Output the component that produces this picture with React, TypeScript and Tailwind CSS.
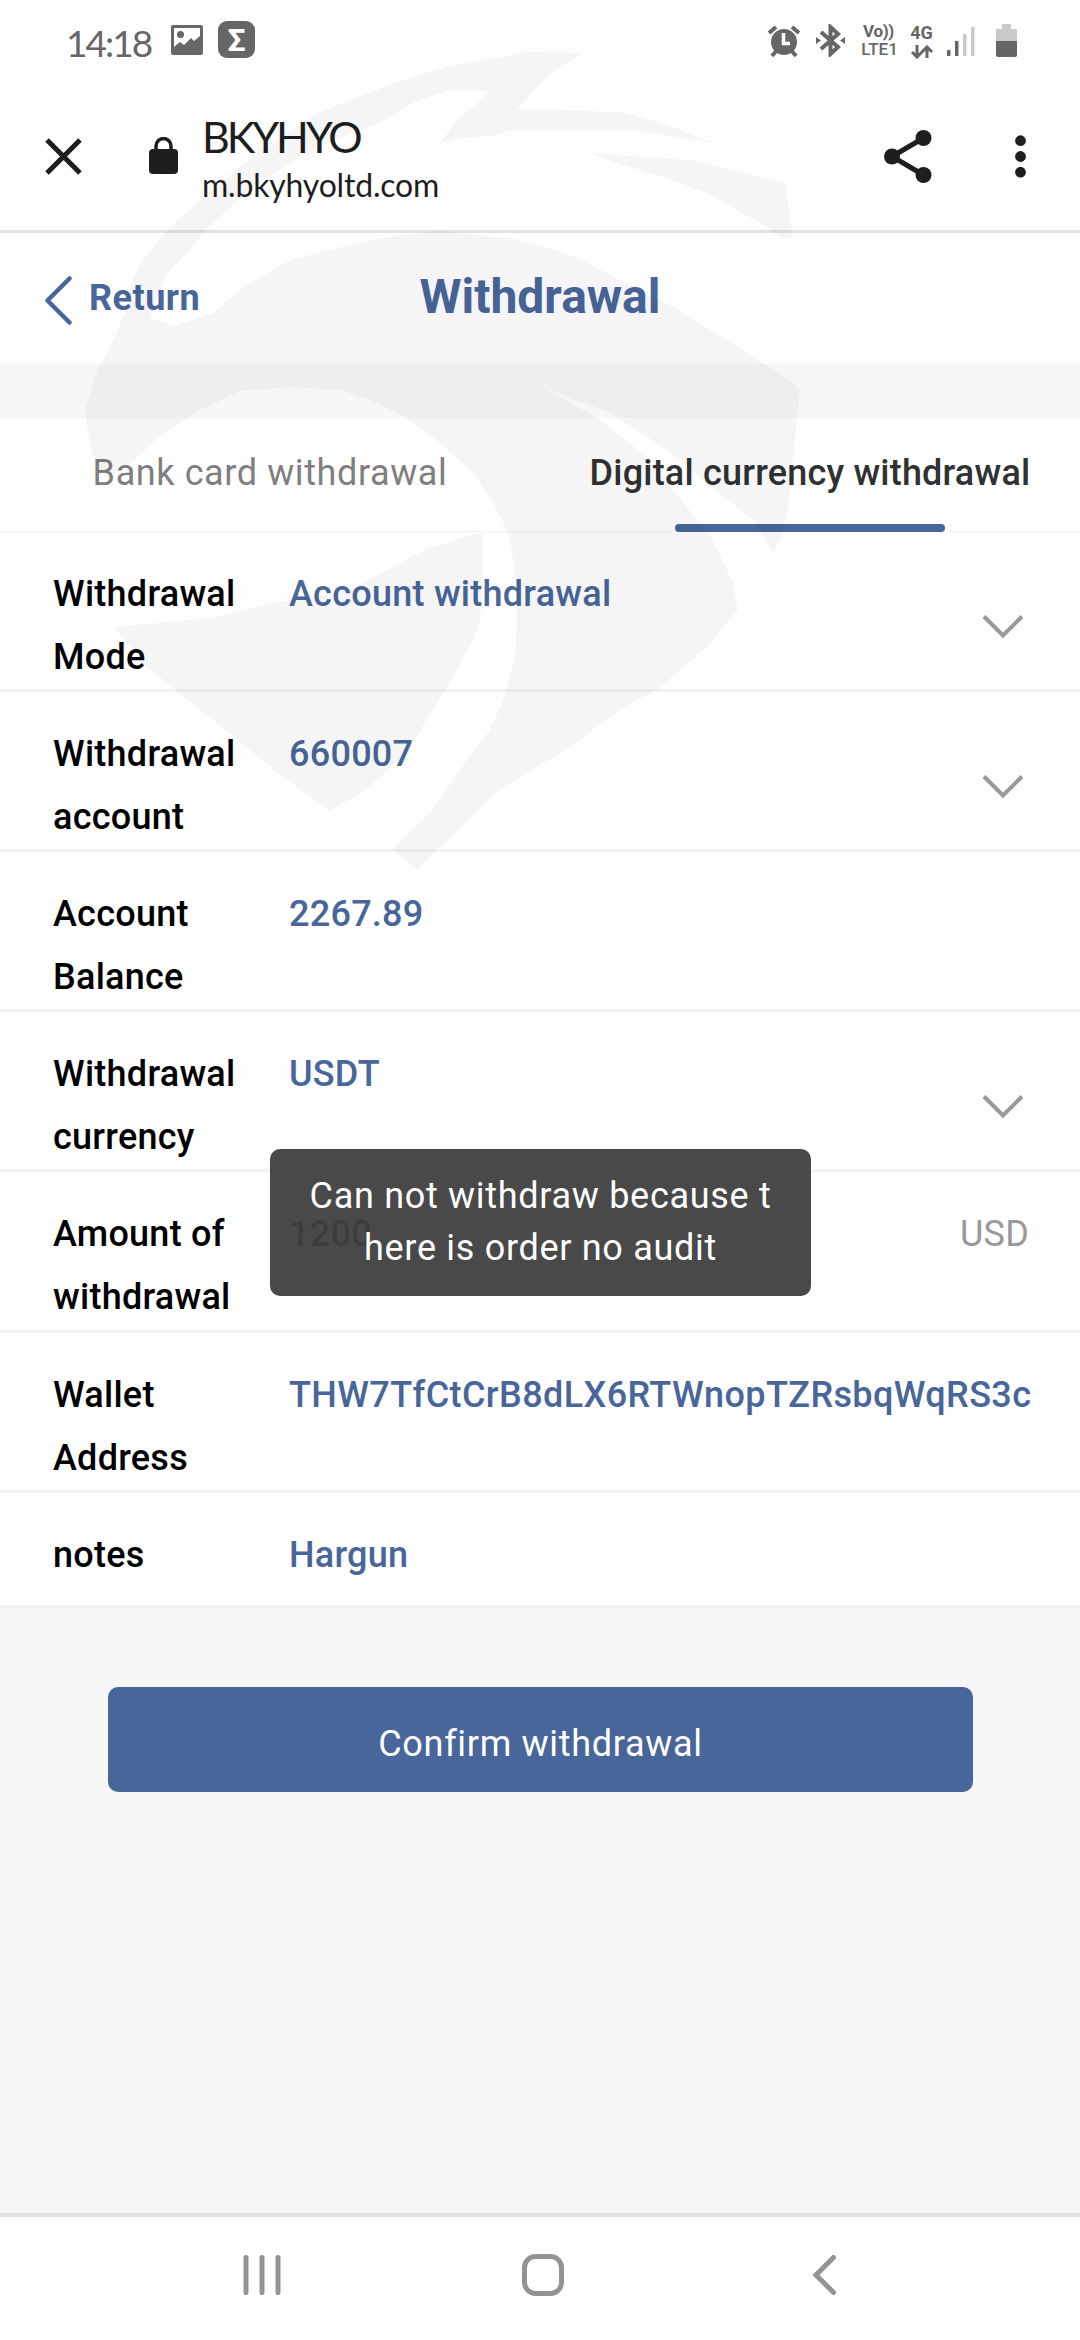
import React from "react";
import clsx from "clsx";

interface IFieldProp {
  label: string;
  value: string;
  hasArrow?: boolean;
  unit?: string;
  height: string;
}

const FIELDS: IFieldProp[] = [
  {
    label: "Withdrawal Mode",
    value: "Account withdrawal",
    hasArrow: true,
    height: "h-[160px]",
  },
  {
    label: "Withdrawal account",
    value: "660007",
    hasArrow: true,
    height: "h-[160px]",
  },
  { label: "Account Balance", value: "2267.89", height: "h-[160px]" },
  {
    label: "Withdrawal currency",
    value: "USDT",
    hasArrow: true,
    height: "h-[160px]",
  },
  {
    label: "Amount of withdrawal",
    value: "1200",
    unit: "USD",
    height: "h-[161px]",
  },
  {
    label: "Wallet Address",
    value: "THW7TfCtCrB8dLX6RTWnopTZRsbqWqRS3c",
    height: "h-[160px]",
  },
  { label: "notes", value: "Hargun", height: "h-[115px]" },
];

const StatusBar: React.FC = () => (
  <div className="flex h-[80px] items-start pt-[21px] pl-[66px] pr-[63px] text-[#666]">
    <span className="w-[105px] font-['Lato'] text-[37px] leading-[44px] tracking-[-2px]">
      14:18
    </span>
    <svg className="mt-[4px] h-[30px] w-[32px]" viewBox="0 0 32 30">
      <path
        fillRule="evenodd"
        fill="currentColor"
        d="M2 0H30Q32 0 32 2V28Q32 30 30 30H2Q0 30 0 28V2Q0 0 2 0ZM3 3V22L9 17L13 20L20 13L23 16L29 11V3Z"
      />
      <circle cx="9.500" cy="9.500" r="3.500" fill="currentColor" />
    </svg>
    <div className="ml-[15px] flex h-[37px] w-[37px] items-center justify-center rounded-[9px] bg-[#666] text-[32px] leading-none font-bold text-white">
      Σ
    </div>
    <div className="grow" />
    <svg className="mt-[3px] h-[33px] w-[34px]" viewBox="0 0 34 33">
      <g stroke="currentColor" strokeWidth="4" fill="none">
        <path d="M2 9L9 3M25 3L32 9M5 32L10 26M29 32L24 26" />
      </g>
      <circle cx="17" cy="18" r="13" fill="currentColor" />
      <path d="M16.500 9V19.500H23" stroke="#fff" strokeWidth="3.500" fill="none" />
    </svg>
    <svg className="ml-[15px] mt-[3px] h-[33px] w-[29px]" viewBox="0 0 29 33">
      <path
        d="M5 8L22 23L14.500 30V3L22 10L5 25"
        fill="none"
        stroke="currentColor"
        strokeWidth="4"
      />
      <path d="M0 13L5 16.500L0 20ZM29 13L24 16.500L29 20Z" fill="currentColor" />
    </svg>
    <div className="ml-[15px] flex w-[39px] flex-col items-center text-[17px] leading-[17px] font-bold">
      <span className="mt-[2px] mr-[2px] tracking-[-0.3px]">Vo))</span>
      <span className="mt-[1px] text-[17px] font-medium">LTE1</span>
    </div>
    <div className="ml-[10px] mt-[3px] flex w-[25px] flex-col items-center text-[18px] leading-[17px] font-bold">
      <span>4G</span>
      <svg className="mt-[4px] h-[14px] w-[24px]" viewBox="0 0 24 14">
        <path
          d="M7 0V11M2 7L7 12L12 7M17 13V2M12 7L17 2L22 7"
          fill="none"
          stroke="currentColor"
          strokeWidth="3"
        />
      </svg>
    </div>
    <svg className="ml-[13px] mt-[5px] h-[30px] w-[28px]" viewBox="0 0 28 30">
      <rect x="0" y="24" width="3.500" height="6" fill="currentColor" />
      <rect x="8" y="15" width="3.500" height="15" fill="currentColor" />
      <rect x="16" y="8" width="3.500" height="22" fill="#c9c9c9" />
      <rect x="24" y="1" width="3.500" height="29" fill="#c9c9c9" />
    </svg>
    <svg className="ml-[21px] mt-[3px] h-[33px] w-[21px]" viewBox="0 0 21 33">
      <path d="M6 0H15V5H20Q21 5 21 6V17H0V6Q0 5 1 5H6Z" fill="#c9c9c9" />
      <path d="M0 17H21V31Q21 33 19 33H2Q0 33 0 31Z" fill="currentColor" />
    </svg>
  </div>
);

const BrowserBar: React.FC = () => (
  <div className="flex h-[153px] items-start border-b-[3px] border-[#e2e2e2] pl-[45px] pr-[54px] text-[#1e1e1e]">
    <svg className="mt-[58px] h-[37px] w-[37px]" viewBox="0 0 37 37">
      <path d="M2 2L35 35M35 2L2 35" stroke="currentColor" strokeWidth="5" />
    </svg>
    <svg className="ml-[67px] mt-[57px] h-[37px] w-[29px]" viewBox="0 0 29 37">
      <rect y="12" width="29" height="25" rx="4" fill="currentColor" />
      <path
        d="M7 13V9A7.500 7.500 0 0 1 22 9V13"
        fill="none"
        stroke="currentColor"
        strokeWidth="3.500"
      />
    </svg>
    <div className="ml-[24px] flex grow flex-col font-['Lato']">
      <span className="mt-[32px] text-[43px] leading-[50px] tracking-[-3px]">
        BKYHYO
      </span>
      <span className="mt-[3px] text-[32px] leading-[40px] tracking-[-0.2px]">
        m.bkyhyoltd.com
      </span>
    </div>
    <svg className="mt-[50px] h-[53px] w-[48px]" viewBox="0 0 48 53">
      <path
        d="M39.500 8L8 26.500L39.500 45"
        fill="none"
        stroke="currentColor"
        strokeWidth="5"
      />
      <g fill="currentColor">
        <circle cx="39.500" cy="8" r="8" />
        <circle cx="8" cy="26.500" r="8" />
        <circle cx="39.500" cy="45" r="8" />
      </g>
    </svg>
    <svg
      className="ml-[83px] mt-[55px] h-[43px] w-[11px]"
      viewBox="0 0 11 43"
      fill="currentColor"
    >
      <circle cx="5.500" cy="5.700" r="5.400" />
      <circle cx="5.500" cy="21.500" r="5.400" />
      <circle cx="5.500" cy="37.200" r="5.400" />
    </svg>
  </div>
);

const TitleBar: React.FC = () => (
  <div className="grid h-[131px] grid-cols-[1fr_auto_1fr] items-start pl-[44px] pr-[44px] text-[#48669a]">
    <div className="flex">
      <svg className="mt-[43px] h-[49px] w-[28px]" viewBox="0 0 28 49">
        <path
          d="M25.500 2.500L3.500 24.500L25.500 46.500"
          fill="none"
          stroke="currentColor"
          strokeWidth="4.500"
          strokeLinecap="round"
          strokeLinejoin="round"
        />
      </svg>
      <span className="ml-[17px] mt-[43px] text-[36px] leading-[44px] font-bold tracking-[0.5px]">
        Return
      </span>
    </div>
    <h1 className="mt-[36px] text-[48px] leading-[56px] font-bold">
      Withdrawal
    </h1>
  </div>
);

const Tabs: React.FC = () => (
  <div className="grid h-[114px] grid-cols-2 border-b border-[#f3f3f3] text-[36px] leading-[42px]">
    <div className="pt-[34px] text-center tracking-[0.6px] text-[#7f7f7f]">
      Bank card withdrawal
    </div>
    <div className="flex flex-col items-center justify-between pt-[34px] font-medium tracking-[0.2px] text-[#303133]">
      <span className="whitespace-nowrap">Digital currency withdrawal</span>
      <span className="mb-[-1px] h-[8px] w-[270px] shrink-0 rounded-[4px] bg-[#48669a]" />
    </div>
  </div>
);

const Field: React.FC<IFieldProp> = ({
  label,
  value,
  hasArrow,
  unit,
  height,
}) => (
  <div
    className={clsx(
      "flex items-start border-b-[3px] border-[#f2f2f2] bg-[#fefefe] pt-[31px] pl-[53px] text-[36px] leading-[63px] font-medium tracking-[0.25px]",
      height
    )}
  >
    <span className="w-[210px] shrink-0 pr-[20px] text-black">{label}</span>
    <span
      className={clsx(
        "ml-[26px] grow whitespace-nowrap text-[#48669a]",
        value.length > 30 && "tracking-[0.4px]"
      )}
    >
      {value}
    </span>
    {hasArrow && (
      <svg
        className="mr-[56px] mt-[51px] h-[25px] w-[42px]"
        viewBox="0 0 42 25"
      >
        <path
          d="M2 2.500L21 21.500L40 2.500"
          fill="none"
          stroke="#999"
          strokeWidth="4"
        />
      </svg>
    )}
    {unit && (
      <span className="mr-[51px] font-normal text-[#999]">{unit}</span>
    )}
  </div>
);

const NavBar: React.FC = () => (
  <div className="flex h-[127px] items-start border-t-[4px] border-[#e2e2e2] bg-[#fefefe] pt-[36px] pl-[243px]">
    <svg className="h-[44px] w-[38px]" viewBox="0 0 38 44">
      <path
        d="M3 4.500V39.500M19 4.500V39.500M35 4.500V39.500"
        stroke="#939393"
        strokeWidth="5"
        strokeLinecap="round"
      />
    </svg>
    <svg className="ml-[241px] h-[44px] w-[42px]" viewBox="0 0 42 44">
      <rect
        x="2.500"
        y="3.500"
        width="37"
        height="37"
        rx="11"
        fill="none"
        stroke="#939393"
        strokeWidth="5"
      />
    </svg>
    <svg className="ml-[248px] h-[44px] w-[26px]" viewBox="0 0 26 44">
      <path
        d="M21.500 4.500L4 22L21.500 39.500"
        fill="none"
        stroke="#939393"
        strokeWidth="5"
        strokeLinecap="round"
      />
    </svg>
  </div>
);

// eagle watermark, lies over the whole top half
const Watermark: React.FC = () => (
  <svg
    className="pointer-events-none absolute top-0 left-0 h-[900px] w-[1080px]"
    viewBox="0 0 1080 900"
    fill="#000"
    fillOpacity="0.037"
  >
    <path d="M583 53L525 52L485 60L450 66L403 80L368 93L320 112L258 153L200 200L167 230L145 257L132 280L126 310L112 343L97 370L85 410L90 447L100 475L120 472L140 455L160 436L200 410L240 391L290 387L340 390L370 400L400 414L440 443L473 473L493 503L502 520L510 540L515 573L517 623L515 657L503 700L490 730L468 758L432 811L392 849L417 870L438 849L499 790L570 747L621 709L657 690L707 647L738 610L733 583L713 540L687 507L647 457L600 420L537 383L573 400L607 411L667 450L707 483L753 520L773 553L780 540L788 507L795 440L800 390L790 380L763 363L727 340L673 307L620 280L583 260L540 245L507 238L440 231L387 237L327 250L290 260L243 287L213 313L175 326L150 318L160 290L167 273L183 257L206 230L241 197L262 180L317 147L379 123L413 103L450 90L490 91L473 107L457 120L440 143L457 138L493 136L507 131L640 131L713 143L673 127L623 112L517 109L550 73Z" />
    <path d="M590 153L640 157L690 160L740 172L785 183L793 238L780 238L760 223L707 193L657 175L613 162Z" />
    <path d="M478 533L483 533L483 576L480 620L473 640L453 677L407 752L366 790L330 811L279 774L213 720L147 667L114 627L213 618L279 602L346 592L387 570L427 549Z" />
  </svg>
);

const Toast: React.FC = () => (
  <div className="absolute top-[1149px] left-[270px] h-[147px] w-[541px] rounded-[10px] bg-[#3a3a3a]/92 pt-[21px] text-center text-[36px] leading-[52px] tracking-[0.7px] text-white">
    Can not withdraw because t
    <br />
    here is order no audit
  </div>
);

export default function App() {
  return (
    <div className="relative flex h-[2340px] w-[1080px] flex-col overflow-hidden bg-[#f7f7f7] font-['Roboto',sans-serif]">
      <div className="bg-[#fefefe]">
        <StatusBar />
        <BrowserBar />
        <TitleBar />
      </div>
      <div className="mt-[54px] bg-[#fefefe]">
        <Tabs />
        {FIELDS.map((field) => (
          <Field key={field.label} {...field} />
        ))}
      </div>
      <div className="pt-[79px] pr-[107px] pl-[108px]">
        <button className="h-[105px] w-full rounded-[10px] bg-[#48669a] pt-[8px] text-[36px] tracking-[0.7px] text-white">
          Confirm withdrawal
        </button>
      </div>
      <div className="grow" />
      <NavBar />
      <Watermark />
      <Toast />
    </div>
  );
}
